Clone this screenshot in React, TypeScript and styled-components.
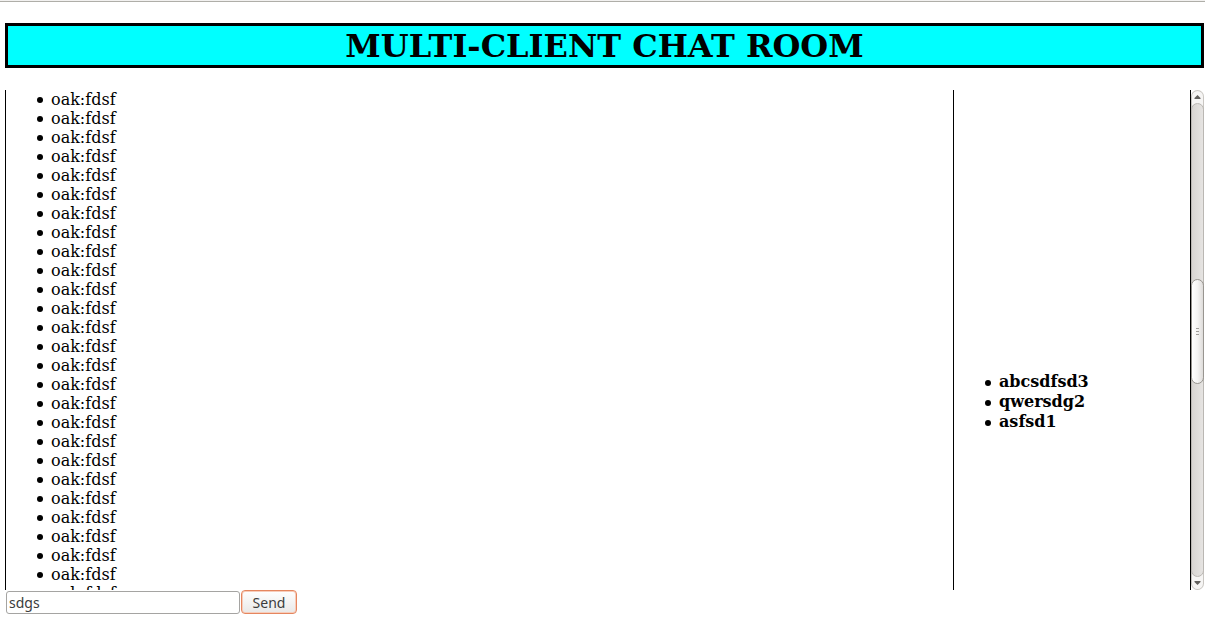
import React, { useState } from "react";
import styled, { createGlobalStyle } from "styled-components";

const GlobalStyle = createGlobalStyle`
  * { box-sizing: border-box; }
  body {
    margin: 0;
    background: #fff;
    color: #000;
    font-family: "DejaVu Serif", serif;
    font-size: 16px;
  }
`;

const Page = styled.div`
  border-top: 1px solid #f2f1f0;
`;

const Content = styled.main`
  border-top: 1px solid #afaea8;
  padding: 21px 1px 16px 5px;
`;

const Title = styled.h1`
  margin: 0 0 22px;
  border: 3px solid #000;
  padding-top: 2px;
  background: #0ff;
  font-size: 32px;
  line-height: 37px;
  text-align: center;
`;

const Room = styled.div`
  display: flex;
  height: 500px;
  overflow: hidden;
`;

const Messages = styled.section`
  flex: 1;
  border-left: 1px solid #000;
  overflow: hidden;
`;

const Users = styled.section`
  flex: 0 0 238px;
  border-left: 1px solid #000;
  border-right: 1px solid #000;
  padding-top: 282px;
`;

const List = styled.ul<{ $strong?: boolean }>`
  margin: 0;
  padding-left: 31px;
  list-style: none;
  font-weight: ${(p) => (p.$strong ? 700 : 400)};
  line-height: ${(p) => (p.$strong ? 20 : 19)}px;
`;

const Item = styled.li`
  display: flex;
  align-items: center;
  gap: 8px;

  &::before {
    content: "";
    width: 6px;
    height: 6px;
    margin-top: 1px;
    border-radius: 50%;
    background: #000;
  }
`;

const Scrollbar = styled.div`
  display: flex;
  flex: 0 0 13px;
  flex-direction: column;
  border-radius: 7px;
  background: #f6f5f4;
  box-shadow: inset 0 0 0 1px #c9c6c2;
`;

const Arrow = styled.button`
  display: flex;
  align-items: center;
  justify-content: center;
  height: 13px;
  border: 0;
  padding: 0;
  background: none;
`;

const Track = styled.div`
  display: flex;
  flex: 1;
  flex-direction: column;
  border: 1px solid #bab7b3;
  border-radius: 7px;
  background: linear-gradient(to right, #d8d5d2, #e6e4e2);
`;

const Before = styled.div`
  flex: 175 1 0;
`;

const After = styled.div`
  flex: 192 1 0;
`;

const Thumb = styled.div`
  display: flex;
  flex: 0 0 105px;
  align-items: center;
  justify-content: center;
  margin: 0 -1px;
  border: 1px solid #989590;
  border-radius: 7px;
  background: linear-gradient(to right, #fff, #f5f4f3 50%, #dedcda);
`;

const Form = styled.form`
  display: flex;
  gap: 1px;
  padding: 1px;
`;

const Field = styled.input`
  width: 234px;
  height: 23px;
  border: 1px solid #a5a4a2;
  border-radius: 3px;
  padding: 0 2px;
  background: #fff;
  color: #3c3c3c;
  font: 14px "Noto Sans", sans-serif;
  outline: 0;
`;

const Send = styled.button`
  width: 56px;
  height: 24px;
  margin-top: -1px;
  border: 1px solid #e5865f;
  border-radius: 4px;
  padding: 0;
  background: linear-gradient(#fff, #e9e8e7);
  box-shadow: inset 0 0 0 1px #f7cdbb;
  color: #3c3c3c;
  font: 14px "Noto Sans", sans-serif;
`;

const messages = Array.from({ length: 27 }, () => "oak:fdsf");
const users = ["abcsdfsd3", "qwersdg2", "asfsd1"];

export default function App() {
  const [draft, setDraft] = useState("sdgs");

  return (
    <>
      <GlobalStyle />
      <Page>
        <Content>
          <Title>MULTI-CLIENT CHAT ROOM</Title>
          <Room>
            <Messages aria-label="Messages">
              <List>
                {messages.map((message, i) => (
                  <Item key={i}>{message}</Item>
                ))}
              </List>
            </Messages>
            <Users aria-label="Users">
              <List $strong>
                {users.map((user) => (
                  <Item key={user}>{user}</Item>
                ))}
              </List>
            </Users>
            <Scrollbar>
              <Arrow type="button" aria-label="Scroll up">
                <svg width="7" height="5" viewBox="0 0 7 5">
                  <path d="M3.5 1 6.5 4V5H.5V4Z" fill="#62605d" />
                </svg>
              </Arrow>
              <Track>
                <Before />
                <Thumb>
                  <svg width="3" height="7" viewBox="0 0 3 7">
                    <path d="M0 .5H3M0 3.5H3M0 6.5H3" stroke="#a19e9a" />
                  </svg>
                </Thumb>
                <After />
              </Track>
              <Arrow type="button" aria-label="Scroll down">
                <svg width="7" height="5" viewBox="0 0 7 5">
                  <path d="M3.5 4 6.5 1V0H.5V1Z" fill="#62605d" />
                </svg>
              </Arrow>
            </Scrollbar>
          </Room>
          <Form onSubmit={(e: React.FormEvent) => e.preventDefault()}>
            <Field
              aria-label="Message"
              value={draft}
              onChange={(e) => setDraft(e.target.value)}
            />
            <Send type="submit">Send</Send>
          </Form>
        </Content>
      </Page>
    </>
  );
}
